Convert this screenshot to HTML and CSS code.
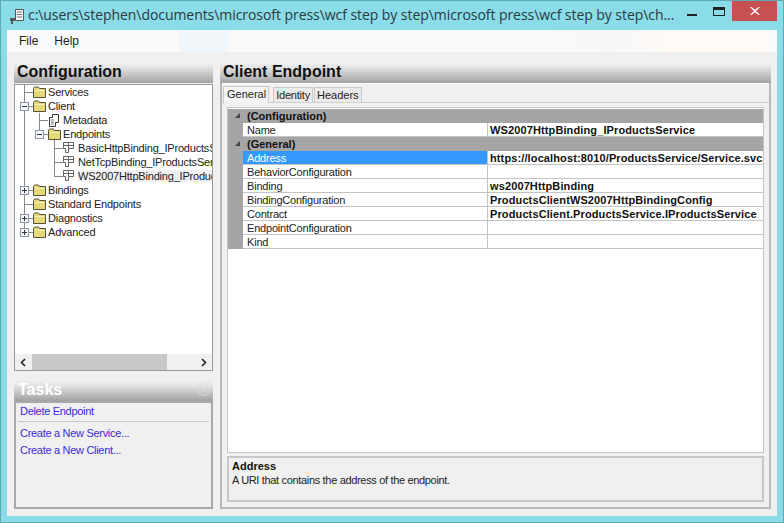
FILE: index.html
```html
<!DOCTYPE html>
<html lang="en">
<head>
    <meta charset="UTF-8">
    <title>WCF Service Configuration Editor</title>
    <link rel="stylesheet" href="styles.css">
</head>
<body>

<svg class="defs" width="0" height="0">
    <symbol id="folder" viewBox="0 0 13 12" width="13" height="12">
        <path d="M.5 2.500 1.500 1h4l1 1.500h6v9H.5z" fill="#e6d977" stroke="#55503a"/>
        <path d="M1.500 4h10v1h-10z" fill="#f7efb4"/>
    </symbol>
    <symbol id="doc" viewBox="0 0 13 14" width="13" height="14">
        <path d="M1.500 4.500h6v9h-6z" fill="#fff" stroke="#333"/>
        <path d="M4.500 4V1.500h6v8h-3" fill="#fff" stroke="#333"/>
        <path d="M3 7h3M3 9h3M3 11h3" stroke="#777"/>
    </symbol>
    <symbol id="node" viewBox="0 0 12 12" width="12" height="12">
        <path d="M.5 .5h10v6h-5v4H2.500v-4h-2zM5.500 .5v6M.5 3.500h10" fill="#fff" stroke="#666"/>
    </symbol>
    <symbol id="plus" viewBox="0 0 9 9" width="9" height="9">
        <rect x=".5" y=".5" width="8" height="8" fill="#f4f7fb" stroke="#8a97a8"/>
        <path d="M2 4.500h5M4.500 2v5" stroke="#333"/>
    </symbol>
    <symbol id="minus" viewBox="0 0 9 9" width="9" height="9">
        <rect x=".5" y=".5" width="8" height="8" fill="#f4f7fb" stroke="#8a97a8"/>
        <path d="M2 4.500h5" stroke="#333"/>
    </symbol>
</svg>

<div class="window">

    <div class="titlebar">
        <svg class="appicon" width="16" height="17" viewBox="0 0 16 17">
            <path d="M6.500 1.500h8v11h-8z" fill="#f4f4f4" stroke="#555"/>
            <path d="M8 4h5M8 6.500h5M8 9h5" stroke="#777"/>
            <path d="M1 10h5v3H4v3H2v-3H1z" fill="#555"/>
        </svg>
        <span class="titletext">c:\users\stephen\documents\microsoft press\wcf step by step\microsoft press\wcf step by step\ch...</span>
        <div class="controls">
            <svg class="ctl-min" width="10" height="2"><rect width="10" height="2" fill="#222"/></svg>
            <svg class="ctl-max" width="12" height="9"><rect x=".5" y=".5" width="11" height="8" fill="none" stroke="#222"/><rect x="1" y="1" width="10" height="2" fill="#222"/></svg>
            <div class="ctl-close">
                <svg width="10" height="8" viewBox="0 0 10 8"><path d="M1.500 0 5 2.800 8.500 0H10L6 4l4 4H8.500L5 5.200 1.500 8H0l4-4-4-4z" fill="#fff"/></svg>
            </div>
        </div>
    </div>

    <div class="client">
        <div class="menubar">
            <span class="menuitem">File</span>
            <span class="menuitem">Help</span>
        </div>

        <div class="panes">
            <div class="leftpane">
                <h2 class="panehead">Configuration</h2>
                <div class="treebox">
                    <div class="tree">
                        <div class="row"><svg class="g0" viewBox="16 0 31 14"><path d="M24.500 0v14M24 7.500h9" class="ln"/><use href="#folder" x="33" y="1"/></svg>Services</div>
                        <div class="row"><svg class="g0" viewBox="16 0 31 14"><path d="M24.500 0v14M24 7.500h9" class="ln"/><use href="#minus" x="20" y="3"/><use href="#folder" x="33" y="1"/></svg>Client</div>
                        <div class="row"><svg class="g1" viewBox="16 0 46 14"><path d="M24.500 0v14M39.500 0v14M39 7.500h9" class="ln"/><use href="#doc" x="48" y="0"/></svg>Metadata</div>
                        <div class="row"><svg class="g1" viewBox="16 0 46 14"><path d="M24.500 0v14M39.500 0v7M39 7.500h9M54.500 11v3" class="ln"/><use href="#minus" x="35" y="3"/><use href="#folder" x="48" y="1"/></svg>Endpoints</div>
                        <div class="row"><svg class="g2" viewBox="16 0 61 14"><path d="M24.500 0v14M54.500 0v14M54 7.500h9" class="ln"/><use href="#node" x="63" y="1"/></svg>BasicHttpBinding_IProductsService</div>
                        <div class="row"><svg class="g2" viewBox="16 0 61 14"><path d="M24.500 0v14M54.500 0v14M54 7.500h9" class="ln"/><use href="#node" x="63" y="1"/></svg>NetTcpBinding_IProductsService</div>
                        <div class="row"><svg class="g2" viewBox="16 0 61 14"><path d="M24.500 0v14M54.500 0v7M54 7.500h9" class="ln"/><use href="#node" x="63" y="1"/></svg><span class="picked">WS2007HttpBinding_IProductsService</span></div>
                        <div class="row"><svg class="g0" viewBox="16 0 31 14"><path d="M24.500 0v14M24 7.500h9" class="ln"/><use href="#plus" x="20" y="3"/><use href="#folder" x="33" y="1"/></svg>Bindings</div>
                        <div class="row"><svg class="g0" viewBox="16 0 31 14"><path d="M24.500 0v14M24 7.500h9" class="ln"/><use href="#folder" x="33" y="1"/></svg>Standard Endpoints</div>
                        <div class="row"><svg class="g0" viewBox="16 0 31 14"><path d="M24.500 0v14M24 7.500h9" class="ln"/><use href="#plus" x="20" y="3"/><use href="#folder" x="33" y="1"/></svg>Diagnostics</div>
                        <div class="row"><svg class="g0" viewBox="16 0 31 14"><path d="M24.500 0v7M24 7.500h9" class="ln"/><use href="#plus" x="20" y="3"/><use href="#folder" x="33" y="1"/></svg>Advanced</div>
                    </div>
                    <div class="hscroll">
                        <svg class="arrow" width="8" height="9" viewBox="0 0 8 9"><path d="M6 1 2.500 4.500 6 8" fill="none" stroke="#222" stroke-width="1.600"/></svg>
                        <div class="thumb"></div>
                        <svg class="arrow" width="8" height="9" viewBox="0 0 8 9"><path d="M2 1l3.500 3.500L2 8" fill="none" stroke="#222" stroke-width="1.600"/></svg>
                    </div>
                </div>

                <h2 class="panehead taskhead">
                    Tasks
                    <svg width="13" height="13" viewBox="0 0 13 13"><circle cx="6.500" cy="6.500" r="5.800" fill="none" stroke="#ddd"/><path d="M4 4l2.500 2 2.500-2M4 7l2.500 2L9 7" fill="none" stroke="#ddd"/></svg>
                </h2>
                <div class="taskbox">
                    <a class="tasklink">Delete Endpoint</a>
                    <div class="tasksep"></div>
                    <a class="tasklink">Create a New Service...</a>
                    <a class="tasklink">Create a New Client...</a>
                </div>
            </div>

            <div class="rightpane">
                <h2 class="panehead">Client Endpoint</h2>
                <div class="tabarea">
                    <div class="tabs">
                        <span class="tab active">General</span>
                        <span class="tab">Identity</span>
                        <span class="tab">Headers</span>
                    </div>
                    <div class="page">
                        <div class="grid">
                            <div class="cat"><span class="caret"></span>(Configuration)</div>
                            <div class="prop"><span class="pname">Name</span><span class="pval">WS2007HttpBinding_IProductsService</span></div>
                            <div class="cat"><span class="caret"></span>(General)</div>
                            <div class="prop sel"><span class="pname">Address</span><span class="pval">https://localhost:8010/ProductsService/Service.svc</span></div>
                            <div class="prop"><span class="pname">BehaviorConfiguration</span><span class="pval"></span></div>
                            <div class="prop"><span class="pname">Binding</span><span class="pval">ws2007HttpBinding</span></div>
                            <div class="prop"><span class="pname">BindingConfiguration</span><span class="pval">ProductsClientWS2007HttpBindingConfig</span></div>
                            <div class="prop"><span class="pname">Contract</span><span class="pval">ProductsClient.ProductsService.IProductsService</span></div>
                            <div class="prop"><span class="pname">EndpointConfiguration</span><span class="pval"></span></div>
                            <div class="prop"><span class="pname">Kind</span><span class="pval"></span></div>
                        </div>
                        <div class="desc">
                            <div class="desctitle">Address</div>
                            <div class="desctext">A URI that contains the address of the endpoint.</div>
                        </div>
                    </div>
                </div>
            </div>
        </div>
    </div>
</div>

</body>
</html>
```

FILE: styles.css
```css
/* Config editor window */

body {
    margin: 0;
    font-family: "Liberation Sans", Arial, sans-serif;
    font-size: 11px;
    letter-spacing: -0.2px;
    color: #222;
    overflow: hidden;
}

.defs {
    display: block;
    height: 0;
}

.window {
    width: 784px;
    height: 523px;
    box-sizing: border-box;
    display: flex;
    flex-direction: column;
    background-color: #8adce8;
    border: 1px solid #5fa9b5;
    padding: 0 6px 6px 6px;
}

.titlebar {
    height: 29px;
    flex: none;
    display: flex;
    align-items: center;
    margin: 0 -6px;
    padding-left: 8px;
}

.appicon {
    flex: none;
    margin-right: 3px;
    margin-top: 1px;
}

.titletext {
    font-family: "Open Sans", sans-serif;
    font-size: 14px;
    letter-spacing: -0.06px;
    color: #2a3a40;
    white-space: nowrap;
    margin-top: -2px;
}

.controls {
    margin-left: auto;
    align-self: flex-start;
    flex: none;
    display: flex;
    align-items: flex-start;
}

.ctl-min {
    margin: 13px 16px 0 0;
}

.ctl-max {
    margin: 6px 7px 0 0;
}

.ctl-close {
    width: 45px;
    height: 20px;
    margin-right: 6px;
    background-color: #c75050;
    display: flex;
    align-items: center;
    justify-content: center;
}

.client {
    flex: 1;
    min-height: 0;
    display: flex;
    flex-direction: column;
    background-color: #f0f0f0;
}

.menubar {
    height: 22px;
    flex: none;
    display: flex;
    align-items: center;
    padding-left: 12px;
    gap: 16px;
    font-size: 12px;
    letter-spacing: 0;
    background: linear-gradient(90deg, #fafafa 0, #fafafa 172px, #f1f6fb 172px, #f1f6fb 222px, #f9f9f9 222px, #f9f9f9 540px, #f6f7f8 600px, #fffaf5 665px, #fffaf5 760px, #fafafa 760px);
}

.panes {
    flex: 1;
    min-height: 0;
    display: flex;
    gap: 7px;
    padding: 10px 6px 7px 7px;
}

.panehead {
    margin: 0;
    height: 21px;
    box-sizing: border-box;
    flex: none;
    padding-left: 3px;
    font-size: 16px;
    letter-spacing: 0;
    line-height: 19px;
    font-weight: bold;
    color: #111;
    background: linear-gradient(#f0f0f0, #e4e4e4 25%, #a2a2a2);
}

.leftpane {
    width: 199px;
    flex: none;
    display: flex;
    flex-direction: column;
}

.treebox {
    height: 287px;
    flex: none;
    margin-top: 1px;
    box-sizing: border-box;
    display: flex;
    flex-direction: column;
    background-color: #fff;
    border: 1px solid #999;
}

.tree {
    flex: 1;
    overflow: hidden;
    margin-left: 1px;
}

.row {
    height: 14px;
    display: flex;
    align-items: center;
    white-space: nowrap;
}

.row svg {
    flex: none;
    height: 14px;
    margin-right: 1px;
}

.g0 { width: 31px; }
.g1 { width: 46px; }
.g2 { width: 61px; }

.ln {
    fill: none;
    stroke: #888;
}

.picked {
    background-color: #f0f0f0;
}

.hscroll {
    height: 16px;
    flex: none;
    display: flex;
    align-items: center;
    background-color: #f0f0f0;
}

.arrow {
    flex: none;
    margin: 0 4px;
}

.thumb {
    height: 16px;
    width: 135px;
    margin-left: 1px;
    margin-right: auto;
    background-color: #c8c8c8;
}

.taskhead {
    margin-top: 9px;
    padding: 0 3px 3px 4px;
    line-height: 17px;
    color: #fff;
    display: flex;
    align-items: center;
    justify-content: space-between;
}

.taskbox {
    flex: 1;
    padding: 1px 2px 0 2px;
    display: flex;
    flex-direction: column;
    border: 2px solid #a8a8a8;
}

.tasklink {
    color: #3a2bd6;
    height: 17px;
    line-height: 14px;
    padding-left: 2px;
    letter-spacing: -0.3px;
}

.tasksep {
    height: 1px;
    flex: none;
    margin-bottom: 4px;
    background-color: #c8c8c8;
}

.rightpane {
    flex: 1;
    min-width: 0;
    display: flex;
    flex-direction: column;
}

.tabarea {
    flex: 1;
    min-height: 0;
    display: flex;
    flex-direction: column;
    border: 2px solid #b8b8b8;
    border-top: none;
    padding-top: 3px;
    box-shadow: inset 0 1px 0 #fff;
}

.tabs {
    height: 16px;
    flex: none;
    display: flex;
    align-items: flex-end;
    padding-left: 1px;
    border-bottom: 1px solid #d0d0d0;
}

.tab {
    height: 14px;
    line-height: 14px;
    padding: 0 2px;
    border: 1px solid #c8c8c8;
    border-bottom: none;
    background-color: #eaeaea;
}

.tab.active {
    height: 16px;
    margin-bottom: -1px;
    margin-right: 4px;
    padding: 0 2px 0 3px;
    letter-spacing: 0;
    background-color: #f4f4f4;
}

.tab:last-child {
    margin-left: 1px;
    letter-spacing: 0;
}

.page {
    flex: 1;
    min-height: 0;
    display: flex;
    flex-direction: column;
    gap: 3px;
    padding: 4px 5px 5px 5px;
}

.grid {
    flex: 1;
    min-height: 0;
    background-color: #fff;
    border: 1px solid #c4c4c4;
    padding-top: 1px;
}

.cat {
    height: 14px;
    line-height: 14px;
    padding-left: 19px;
    position: relative;
    font-weight: bold;
    letter-spacing: 0;
    background-color: #a5a5a5;
    color: #111;
}

.caret {
    position: absolute;
    left: 7px;
    top: 4px;
    border-style: solid;
    border-width: 0 0 5px 5px;
    border-color: transparent transparent #444 transparent;
}

.prop {
    height: 14px;
    box-sizing: border-box;
    display: flex;
    border-left: 15px solid #a5a5a5;
    line-height: 13px;
}

.pname {
    width: 245px;
    box-sizing: border-box;
    flex: none;
    padding-left: 4px;
    padding-top: 1px;
    border-right: 1px solid #c4c4c4;
    border-bottom: 1px solid #c4c4c4;
    overflow: hidden;
    white-space: nowrap;
}

.pval {
    flex: 1;
    min-width: 0;
    padding-left: 2px;
    padding-top: 1px;
    overflow: hidden;
    white-space: nowrap;
    font-weight: bold;
    letter-spacing: 0.12px;
    color: #111;
    border-bottom: 1px solid #c4c4c4;
}

.sel .pname {
    background-color: #3399ff;
    color: #fff;
}

.desc {
    height: 46px;
    flex: none;
    box-sizing: border-box;
    padding: 1px 3px;
    border: 2px solid #c8c8c8;
    line-height: 14px;
}

.desctitle {
    font-weight: bold;
    letter-spacing: 0;
    color: #111;
}

.desctext {
    letter-spacing: -0.33px;
}
```
